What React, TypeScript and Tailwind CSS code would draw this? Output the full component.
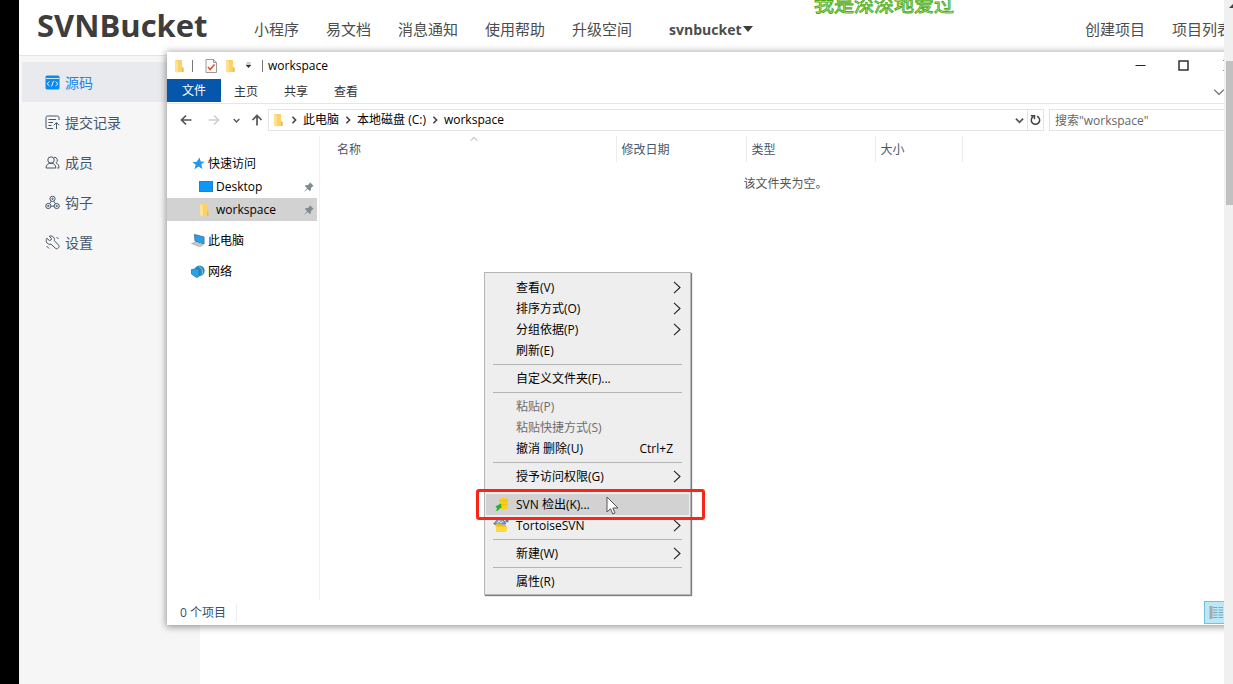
import type { ReactNode } from 'react';
import clsx from 'clsx';

const navItems = ['小程序', '易文档', '消息通知', '使用帮助', '升级空间'];

const SourceIcon = () => (
  <svg width="15" height="15" viewBox="0 0 15 15" fill="none">
    <rect x="0.5" y="0.5" width="14" height="14" rx="1.5" fill="#0b8af2" />
    <path d="M1 3.5h13" stroke="#fff" strokeWidth="0.8" />
    <path d="M4.5 6.5L2 8.7l2.500 2.200M10.500 6.500L13 8.700l-2.500 2.200M8.500 6L6.500 11.500" stroke="#fff" strokeWidth="0.9" />
  </svg>
);

const CommitIcon = () => (
  <svg width="15" height="15" viewBox="0 0 15 15" fill="none" stroke="#45566b">
    <path d="M8 13.500H2.500a1.500 1.500 0 0 1-1.500-1.500V2.500A1.500 1.500 0 0 1 2.500 1H12.500a1.500 1.500 0 0 1 1.500 1.500V5" />
    <path d="M3.500 4.500h7.500M3.500 7.500h4.500M3.500 10.500h3M11.500 14V8M8.800 10.300l2.700-2.700 2.700 2.700" />
  </svg>
);

const MembersIcon = () => (
  <svg width="15" height="15" viewBox="0 0 15 15" fill="none" stroke="#45566b">
    <circle cx="6" cy="5" r="3.200" />
    <path d="M1 13c0-2.800 1.800-4.800 5-4.800S10.800 10.200 10.800 13zM9 2.300a3 3 0 0 1 2 5.500c1.800.8 3 2.600 3 5.200h-1.800" />
  </svg>
);

const HookIcon = () => (
  <svg width="15" height="15" viewBox="0 0 15 15" fill="none" stroke="#45566b">
    <circle cx="7.500" cy="3.800" r="2.600" />
    <circle cx="3.300" cy="11" r="2.600" />
    <circle cx="11.700" cy="11" r="2.600" />
    <circle cx="7.500" cy="3.800" r="0.700" />
    <circle cx="3.300" cy="11" r="0.700" />
    <circle cx="11.700" cy="11" r="0.700" />
    <path d="M6.300 6.200L4.500 8.700M8.700 6.200l1.800 2.500M6 11.200h3" />
  </svg>
);

const WrenchIcon = () => (
  <svg width="15" height="15" viewBox="0 0 15 15" fill="none" stroke="#45566b" strokeLinejoin="round">
    <path d="M1.800 3.200l2.500 2.300 1.700-.5.400-1.700L4.200 1.200c2-.8 4.300.1 5 2 .4.900.4 1.700.2 2.500l4 4.200c.9 1 .8 2.400-.1 3.200-.9.900-2.300.8-3.200-.1L6 9.200c-1.400.4-3 0-4-1.200-1-1.300-1.100-3.300-.2-4.800z" />
    <path d="M1.500 11l2.500 2.500M11.500 2l2 2" />
  </svg>
);

const sideItems: { label: string; icon: ReactNode; active?: boolean }[] = [
  { label: '源码', icon: <SourceIcon />, active: true },
  { label: '提交记录', icon: <CommitIcon /> },
  { label: '成员', icon: <MembersIcon /> },
  { label: '钩子', icon: <HookIcon /> },
  { label: '设置', icon: <WrenchIcon /> },
];

const FolderIcon = () => (
  <svg width="10" height="14" viewBox="0 0 10 14">
    <path d="M1 1h7v7l1.500 1v4H1z" fill="#fbd26a" />
    <path d="M1 1l3 1.500V14L1 12.500z" fill="#fde391" />
    <path d="M8 8l1.500 1v4H8z" fill="#eeb945" />
  </svg>
);

const CheckDocIcon = () => (
  <svg width="12" height="14" viewBox="0 0 12 14" fill="none">
    <path d="M1 .5h7.500l3 3v10h-10.500z" fill="#fafafa" stroke="#9a9a9a" />
    <path d="M8.500.5v3h3" stroke="#9a9a9a" />
    <path d="M3 8l2.200 2.500L9.500 5.500" stroke="#e0562a" strokeWidth="1.600" />
  </svg>
);

const StarIcon = () => (
  <svg width="13" height="13" viewBox="0 0 13 13">
    <path d="M7.500.5l1.200 4 4.100.2-3.500 2.400 1 5-3.700-2.600-4.300 2.700 1.500-4.500L.3 5.200l4.500-.5z" fill="#1a9af0" />
  </svg>
);

const DesktopIcon = () => (
  <svg width="14" height="11" viewBox="0 0 14 11">
    <rect x="0.500" y="0.500" width="13" height="10" fill="#0a98fb" stroke="#2a7fc0" />
  </svg>
);

const PcIcon = () => (
  <svg width="14" height="13" viewBox="0 0 14 13">
    <path d="M3.500.5L13 3v7L4 7z" fill="#2b9fe6" stroke="#467d9f" />
    <path d="M.5 9.500l4-1.500 7.500 3-3.500 1.800z" fill="#c3c8cc" stroke="#98a0a6" strokeWidth="0.600" />
  </svg>
);

const NetworkIcon = () => (
  <svg width="14" height="13" viewBox="0 0 14 13">
    <circle cx="8.500" cy="5.800" r="5.200" fill="#3488b4" />
    <path d="M8 1.500c3 1.500 4 4.500 3 8" fill="none" stroke="#8ccbea" />
    <path d="M.5 4.500L8 3.500v8L5.500 12.500.5 9z" fill="#25a4ee" stroke="#2c76a0" strokeWidth="0.800" />
  </svg>
);

const PinIcon = () => (
  <svg width="10" height="10" viewBox="0 0 10 10" fill="#7d8b93">
    <path d="M6 .3L9.700 4l-1.200.6L7 6.100v2L5.900 9 3.700 6.900.5 9.700.3 9.500 3.100 6.300.9 4.100 2 3h2l1.500-1.500z" />
  </svg>
);

const Chevron = ({ dir, className }: { dir: 'right' | 'down' | 'up'; className?: string }) => {
  const d = { right: 'M3 1l4 4-4 4', down: 'M1 3l4 4 4-4', up: 'M1 7l4-4 4 4' }[dir];
  return (
    <svg viewBox="0 0 10 10" fill="none" stroke="currentColor" className={clsx('shrink-0', className)}>
      <path d={d} />
    </svg>
  );
};

const Arrow = ({ d, className }: { d: string; className?: string }) => (
  <svg width="12" height="12" viewBox="0 0 12 12" fill="none" stroke="currentColor" strokeWidth="1.700" className={className}>
    <path d={d} />
  </svg>
);

const CheckoutIcon = () => (
  <svg width="15" height="15" viewBox="0 0 15 15">
    <path d="M5.500 2.500c0-2 8.500-2 8.500 0v8.500c0 2-8.500 2-8.500 0z" fill="#fbd01c" />
    <path d="M5.500 3c1.500 1.300 7 1.300 8.500 0M5.500 7c1.500 1.300 7 1.300 8.500 0" fill="none" stroke="#e9b612" strokeWidth="0.800" />
    <path d="M1.500 9.500L7 6.500l.5 4.500-2 .2c0 1.300-1.300 2.500-4 3 1.200-1.200 1.500-2 1.500-3z" fill="#22b230" />
  </svg>
);

const TortoiseIcon = () => (
  <svg width="16" height="15" viewBox="0 0 16 15">
    <path d="M1.500 6C2.500 2.500 5 1 7.500 1.200S12 3 12.500 6z" fill="#7fa5c9" stroke="#55779b" />
    <path d="M4.500 5.500l1.500-3 2 2.500 2-2" fill="none" stroke="#d5e2ee" />
    <circle cx="14" cy="2.800" r="1.700" fill="#5b7ea6" />
    <path d="M0 4.500l3 3" stroke="#7a6a3c" />
    <path d="M3.500 5.500h4l1 1.500h4.500v6.500h-9.500z" fill="#f2b90f" />
    <path d="M2.500 8.500H15l-1.800 5.500H4z" fill="#ffda3d" />
  </svg>
);

type MenuEntry = {
  label: string;
  sub?: boolean;
  disabled?: boolean;
  shortcut?: string;
  icon?: ReactNode;
  hover?: boolean;
};

const menuGroups: MenuEntry[][] = [
  [
    { label: '查看(V)', sub: true },
    { label: '排序方式(O)', sub: true },
    { label: '分组依据(P)', sub: true },
    { label: '刷新(E)' },
  ],
  [{ label: '自定义文件夹(F)...' }],
  [
    { label: '粘贴(P)', disabled: true },
    { label: '粘贴快捷方式(S)', disabled: true },
    { label: '撤消 删除(U)', shortcut: 'Ctrl+Z' },
  ],
  [{ label: '授予访问权限(G)', sub: true }],
  [
    { label: 'SVN 检出(K)...', icon: <CheckoutIcon />, hover: true },
    { label: 'TortoiseSVN', icon: <TortoiseIcon />, sub: true },
  ],
  [{ label: '新建(W)', sub: true }],
  [{ label: '属性(R)' }],
];

const MenuRow = ({ item }: { item: MenuEntry }) => (
  <li className="relative">
    <button
      disabled={item.disabled}
      className={clsx(
        'flex h-[21px] w-full items-center pr-2 text-left text-black disabled:text-[#6d6d6d]',
        item.hover && 'bg-[#d2d2d2]',
      )}>
      <span className="flex w-[30px] shrink-0 justify-center">{item.icon}</span>
      <span className="flex-1">{item.label}</span>
      {item.shortcut && <span className="pr-2">{item.shortcut}</span>}
      {item.sub && (
        <svg width="8" height="13" viewBox="0 0 8 13" fill="none" stroke="#222" strokeWidth="1.100">
          <path d="M1 .8l6 5.700-6 5.700" />
        </svg>
      )}
    </button>
    {item.hover && (
      <>
        <span className="pointer-events-none absolute -top-[5px] -right-4 -bottom-[5px] -left-[10px] z-10 rounded-[3px] border-3 border-[#fb2416]" />
        <svg width="14" height="19" viewBox="0 0 14 19" className="absolute top-[2px] left-[120px]">
          <path d="M1 1v15l3.500-3.200 2.300 5.200 2.200-1-2.200-5H12z" fill="#fff" stroke="#555" />
        </svg>
      </>
    )}
  </li>
);

const ContextMenu = () => (
  <div className="absolute top-[220px] left-[317px] z-10 w-[207px] border border-[#b5b5b5] bg-[#eeeeee] px-px pt-1 pb-[2px] shadow-[1px_1px_1px_#00000080]">
    {menuGroups.map((group, i) => (
      <ul key={i}>
        {i > 0 && (
          <li className="flex h-[7px] items-center px-[7px]">
            <hr className="w-full border-[#b4b4b4]" />
          </li>
        )}
        {group.map((item) => (
          <MenuRow key={item.label} item={item} />
        ))}
      </ul>
    ))}
  </div>
);

const TitleBar = () => (
  <div className="flex h-[27px] items-center pl-[7px] text-[#222]">
    <FolderIcon />
    <span className="ml-2 h-3 w-px bg-[#777]" />
    <span className="ml-3">
      <CheckDocIcon />
    </span>
    <span className="ml-2">
      <FolderIcon />
    </span>
    <svg width="7" height="7" viewBox="0 0 7 7" className="ml-[10px]">
      <path d="M1.500 1h4M1 3h5L3.500 5.800z" fill="#333" stroke="#333" strokeWidth="0.500" />
    </svg>
    <span className="ml-[10px] h-3 w-px bg-[#777]" />
    <h2 className="ml-[5px] text-[12px] text-black">workspace</h2>
    <button aria-label="最小化" className="mr-8 ml-auto">
      <svg width="11" height="11" viewBox="0 0 11 11">
        <path d="M.5 5.500h10" stroke="#222" />
      </svg>
    </button>
    <button aria-label="最大化" className="mr-[34px]">
      <svg width="11" height="11" viewBox="0 0 11 11" fill="none">
        <rect x="1" y="1" width="9" height="9" stroke="#222" strokeWidth="1.400" />
      </svg>
    </button>
    <button aria-label="关闭" className="mr-[5px]">
      <svg width="11" height="11" viewBox="0 0 11 11">
        <path d="M.5.5l10 10M10.500.5l-10 10" stroke="#222" />
      </svg>
    </button>
  </div>
);

const Ribbon = () => (
  <div className="flex h-[25px] items-start border-b border-[#e6e6e6] text-[#333]">
    <button className="h-[23px] w-[54px] bg-[#0657ab] text-white">文件</button>
    {['主页', '共享', '查看'].map((tab) => (
      <button key={tab} className="h-[25px] w-[50px]">
        {tab}
      </button>
    ))}
    <button aria-label="展开功能区" className="mt-[7px] mr-[14px] ml-auto text-[#666]">
      <Chevron dir="down" className="size-3" />
    </button>
  </div>
);

const AddressBar = () => (
  <div className="flex h-8 items-center text-[#222]">
    <button aria-label="后退" className="ml-[13px] text-[#555]">
      <Arrow d="M11.500 6H1.500M6 1.500L1.500 6 6 10.500" />
    </button>
    <button aria-label="前进" className="ml-4 text-[#cfcfcf]">
      <Arrow d="M.5 6h10M6 1.500L10.500 6 6 10.500" />
    </button>
    <button aria-label="最近浏览的位置" className="ml-[13px] text-[#555]">
      <Chevron dir="down" className="size-[7px] stroke-2" />
    </button>
    <button aria-label="上移" className="ml-[11px] text-[#555]">
      <Arrow d="M6 11.500v-10M1.500 6L6 1.500 10.500 6" />
    </button>
    <div className="ml-[5px] flex h-[22px] min-w-0 flex-1 items-center border border-[#e3e3e3] pl-[4px]">
      <FolderIcon />
      {['此电脑', '本地磁盘 (C:)', 'workspace'].map((part) => (
        <span key={part} className="flex items-center text-black first-of-type:ml-[2px]">
          <Chevron dir="right" className="mx-[5px] size-2 stroke-2 text-[#444]" />
          {part}
        </span>
      ))}
      <button aria-label="历史记录" className="mr-[3px] ml-auto text-[#555]">
        <Chevron dir="down" className="size-[9px] stroke-2" />
      </button>
      <button aria-label="刷新" className="flex h-full w-4 items-center justify-center border-l border-[#e3e3e3] text-[#444]">
        <svg width="11" height="12" viewBox="0 0 11 12" fill="none" stroke="currentColor" strokeWidth="1.500">
          <path d="M7 2.200a4.200 4.200 0 1 1-3.700.3" />
          <path d="M.8 1.700h3.700v3.600" />
        </svg>
      </button>
    </div>
    <input
      type="text"
      aria-label="搜索"
      placeholder={'搜索"workspace"'}
      className="ml-[5px] h-[22px] w-[190px] border border-[#e3e3e3] px-[5px] outline-none placeholder:text-[#666]"
    />
  </div>
);

const FolderTree = () => (
  <nav className="flex w-[153px] shrink-0 flex-col border-r border-[#f1f1f1] pt-4 text-black">
    <a href="#quick" className="flex h-[23px] items-center gap-[3px] pl-[25px]">
      <StarIcon />
      快速访问
    </a>
    <a href="#desktop" className="mr-[2px] flex h-[23px] items-center gap-[3px] pr-[3px] pl-8">
      <DesktopIcon />
      <span className="flex-1">Desktop</span>
      <PinIcon />
    </a>
    <a href="#workspace" className="mr-[2px] flex h-[23px] items-center gap-[7px] bg-[#d2d2d2] pr-[3px] pl-8">
      <FolderIcon />
      <span className="flex-1">workspace</span>
      <PinIcon />
    </a>
    <a href="#pc" className="mt-2 flex h-[23px] items-center gap-[3px] pl-6">
      <PcIcon />
      此电脑
    </a>
    <a href="#network" className="mt-2 flex h-[23px] items-center gap-[3px] pl-6">
      <NetworkIcon />
      网络
    </a>
  </nav>
);

const FileList = () => (
  <table className="h-fit w-full table-fixed text-left text-[#46586f]">
    <colgroup>
      <col className="w-[296px]" />
      <col className="w-[130px]" />
      <col className="w-[129px]" />
      <col className="w-[87px]" />
      <col />
    </colgroup>
    <thead>
      <tr className="h-[26px]">
        <th className="relative border-r border-[#ececec] pt-[2px] pl-[17px] font-normal">
          名称
          <Chevron dir="up" className="absolute -top-px left-[150px] size-2 text-[#888]" />
        </th>
        <th className="border-r border-[#ececec] pt-[2px] pl-[5px] font-normal">修改日期</th>
        <th className="border-r border-[#ececec] pt-[2px] pl-[5px] font-normal">类型</th>
        <th className="border-r border-[#ececec] pt-[2px] pl-[5px] font-normal">大小</th>
        <th />
      </tr>
    </thead>
    <tbody>
      <tr>
        <td colSpan={5} className="h-11 pl-3 text-center text-[#555]">
          该文件夹为空。
        </td>
      </tr>
    </tbody>
  </table>
);

const ExplorerWindow = () => (
  <section className="absolute top-[52px] -right-[15px] left-[148px] flex h-[573px] flex-col bg-white text-[12px] shadow-[0_1px_7px_1px_#00000066]">
    <TitleBar />
    <Ribbon />
    <AddressBar />
    <div className="flex min-h-0 flex-1">
      <FolderTree />
      <FileList />
    </div>
    <footer className="flex h-[25px] items-center pl-[13px] text-[#33506a]">
      <span className="border-r border-[#eee] pr-[10px]">0 个项目</span>
      <button aria-label="详细信息" className="mr-[11px] ml-auto flex h-[23px] w-6 items-center justify-center border border-[#77bfe0] bg-[#b9e8f8]">
        <svg width="14" height="13" viewBox="0 0 14 13" fill="none">
          <path d="M2 0v13" stroke="#a9a9a9" strokeWidth="3" />
          <path d="M4 1.500h4.500M4 4h4.500M4 6.500h4.500M4 9h4.500M4 11.500h4.500M9.500 1.500h4.500M9.500 4h4.500M9.500 6.500h4.500M9.500 9h4.500M9.500 11.500h4.500" stroke="#7fa6b5" />
        </svg>
      </button>
    </footer>
    <ContextMenu />
  </section>
);

const Header = () => (
  <header className="flex h-[56px] shrink-0 items-center border-b border-[#e4e4e4] bg-white pl-[18px] text-[15px] whitespace-nowrap text-[#4d4d4d]">
    <h1 className="w-[217px] shrink-0 pb-1 text-[31px] font-bold text-[#3d3d3d]">SVNBucket</h1>
    <nav className="flex gap-[27px] pt-[3px]">
      {navItems.map((item) => (
        <a key={item} href="#nav">
          {item}
        </a>
      ))}
      <button className="ml-[10px] flex items-center text-[14px] font-bold">
        svnbucket
        <svg width="10" height="6" viewBox="0 0 10 6" className="ml-px">
          <path d="M0 0h10L5 6z" fill="#3d3d3d" />
        </svg>
      </button>
    </nav>
    <nav className="-mr-2 ml-auto flex gap-[27px] pt-[3px]">
      <a href="#create">创建项目</a>
      <a href="#projects">项目列表</a>
    </nav>
  </header>
);

const App = () => (
  <div className="flex h-screen overflow-hidden bg-white font-['Open_Sans','Noto_Sans_CJK_SC',sans-serif]">
    <div className="w-[19px] shrink-0 bg-black" />
    <main className="relative flex min-w-0 flex-1 flex-col overflow-hidden">
      <Header />
      <aside className="w-[181px] flex-1 bg-[#f6f6f6] pt-[6px] pl-[3px]">
        {sideItems.map(({ label, icon, active }) => (
          <a
            key={label}
            href="#side"
            className={clsx(
              'flex h-10 items-center gap-[5px] pl-[23px] text-[14px]',
              active ? 'bg-[#e8eaed] text-[#1787ee]' : 'text-[#45566b]',
            )}>
            {icon}
            {label}
          </a>
        ))}
      </aside>
      <p className="absolute -top-[9px] left-[795px] text-[20px] leading-[28px] whitespace-nowrap text-[#f2fbe9] [-webkit-text-stroke:1px_#4fae1c]">
        我是深深地爱过
      </p>
      <ExplorerWindow />
    </main>
    <div className="flex w-[9px] shrink-0 flex-col bg-[#f0f0f0]">
      <svg width="9" height="8" viewBox="0 0 9 8" className="ml-auto">
        <path d="M5 8l5-5v5z" fill="#444" />
      </svg>
      <div className="mt-[53px] ml-[2px] h-36 bg-[#c1c1c1]" />
    </div>
  </div>
);

export default App;
